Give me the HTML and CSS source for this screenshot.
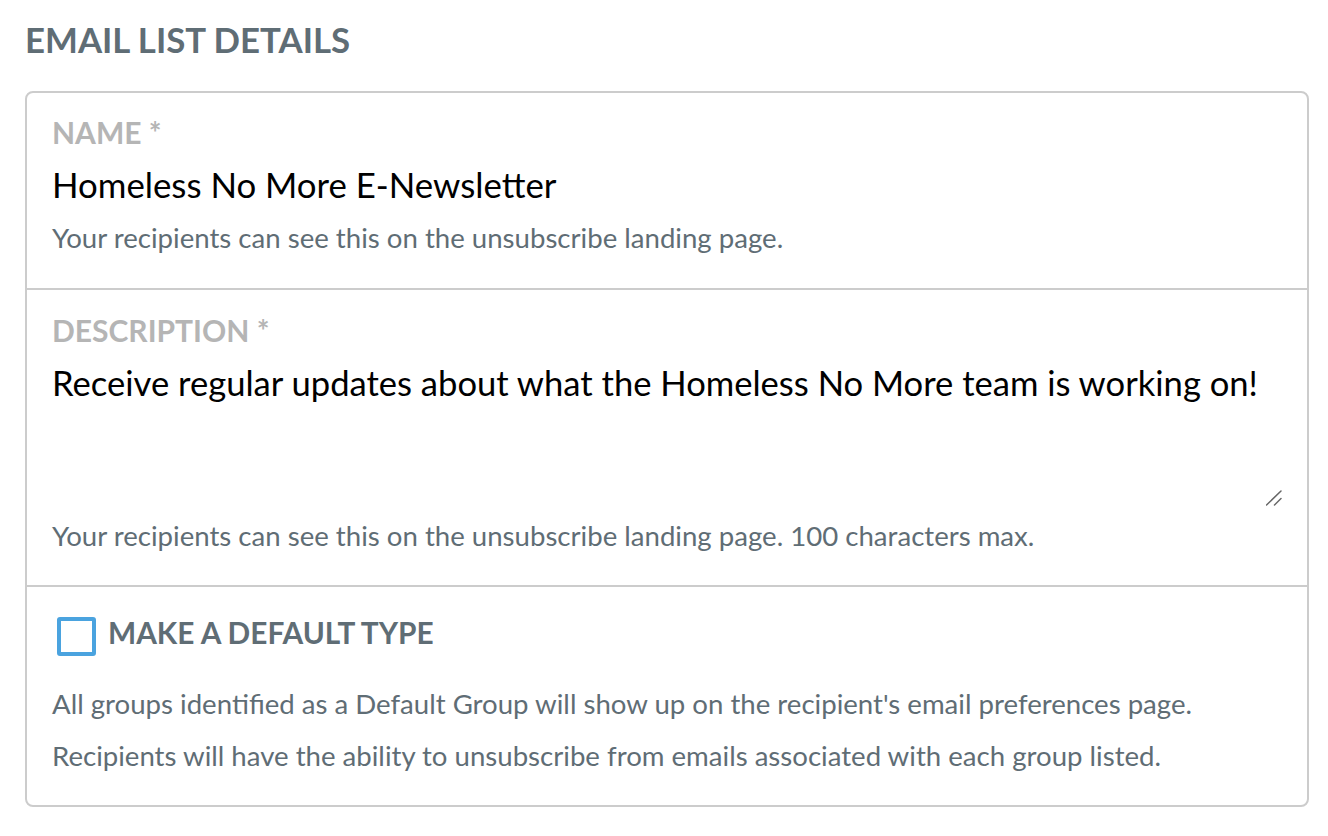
FILE: index.html
```html
<!DOCTYPE html>
<html>
<head>
<meta charset="utf-8">
<link rel="stylesheet" href="styles.css">
</head>
<body>
<div class="page">
  <h1 class="title">EMAIL LIST DETAILS</h1>
  <div class="card">
    <div class="section section-name">
      <div class="label">NAME *</div>
      <div class="value">Homeless No More E-Newsletter</div>
      <div class="help help-name">Your recipients can see this on the unsubscribe landing page.</div>
    </div>
    <div class="section section-desc">
      <div class="label">DESCRIPTION *</div>
      <div class="textarea-wrap">
        <textarea class="textarea">Receive regular updates about what the Homeless No More team is working on!</textarea>
        <svg class="resizer" width="16" height="16" viewBox="0 0 16 16" aria-hidden="true">
          <line x1="0.5" y1="15" x2="15" y2="1" stroke="#666" stroke-width="1.5" stroke-linecap="round"/>
          <line x1="8.5" y1="15" x2="15" y2="8.5" stroke="#666" stroke-width="1.5" stroke-linecap="round"/>
        </svg>
      </div>
      <div class="help help-desc">Your recipients can see this on the unsubscribe landing page. 100 characters max.</div>
    </div>
    <div class="section section-default">
      <label class="check-row">
        <span class="checkbox"></span>
        <span class="check-label">MAKE A DEFAULT TYPE</span>
      </label>
      <p class="note note-first">All groups identified as a Default Group will show up on the recipient's email preferences page.</p>
      <p class="note">Recipients will have the ability to unsubscribe from emails associated with each group listed.</p>
    </div>
  </div>
</div>
</body>
</html>
```

FILE: styles.css
```css
html, body {
  margin: 0;
  padding: 0;
  background: #ffffff;
}
body {
  font-family: Lato, "Open Sans", sans-serif;
}
.page {
  padding: 19px 19px 0 25px;
}
.title {
  margin: 0 0 30px 0;
  font-size: 34.8px;
  line-height: 42px;
  font-weight: 700;
  color: #5f6d75;
}
.card {
  border: 2px solid #cccccc;
  border-radius: 8px;
}
.section {
  padding: 0 25px;
  border-bottom: 2px solid #cccccc;
}
.section-name {
  padding-top: 21px;
  padding-bottom: 33px;
}
.section-desc {
  padding-top: 22px;
  padding-bottom: 32px;
}
.section-default {
  padding-top: 26px;
  padding-bottom: 32px;
  border-bottom: none;
}
.label {
  font-size: 30px;
  line-height: 36px;
  font-weight: 700;
  color: #b5b5b5;
}
.value {
  margin-top: 14px;
  font-size: 34.8px;
  line-height: 42px;
  color: #000000;
}
.help {
  font-size: 27.6px;
  line-height: 34px;
  color: #5f6d75;
}
.help-name {
  margin-top: 15px;
}
.help-desc {
  margin-top: 12px;
}
.textarea-wrap {
  position: relative;
  margin-top: 14px;
}
.textarea {
  display: block;
  box-sizing: border-box;
  width: 100%;
  height: 145px;
  margin: 0;
  padding: 0;
  border: none;
  outline: none;
  font-family: Lato, "Open Sans", sans-serif;
  font-size: 34.6px;
  line-height: 42px;
  color: #000000;
  resize: none;
  background: transparent;
}
.resizer {
  position: absolute;
  right: 0;
  bottom: 1px;
}
.check-row {
  display: flex;
  align-items: flex-start;
  gap: 12px;
}
.checkbox {
  display: block;
  box-sizing: border-box;
  width: 39px;
  height: 39px;
  margin: 4px 0 0 5px;
  border: 4px solid #4aa3df;
  border-radius: 3px;
}
.check-label {
  font-size: 29.8px;
  line-height: 40px;
  font-weight: 700;
  color: #5f6d75;
}
.note {
  margin: 18px 0 0 0;
  font-size: 27.6px;
  line-height: 34px;
  color: #5f6d75;
}
.note-first {
  margin-top: 31px;
}
```
